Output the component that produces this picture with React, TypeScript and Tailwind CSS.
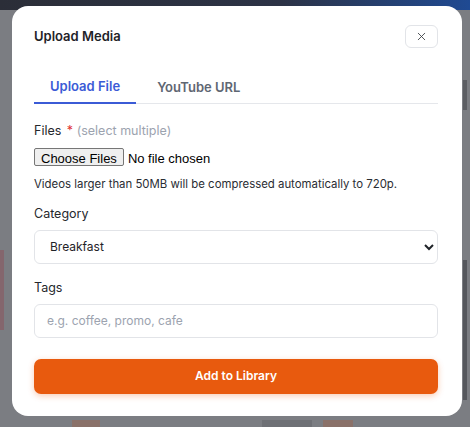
import { X } from "lucide-react";

const App = () => {
  return (
    // dimmed page behind the dialog
    <div className="w-[470px] h-[427px] overflow-hidden pt-[6px] pl-[12px] font-['Inter',sans-serif] [background:linear-gradient(90deg,#2b2e38,#2c3346_60%,#1f4a93)_0_0/100%_10px_no-repeat,linear-gradient(#84666d,#84666d)_0_250px/4px_80px_no-repeat,linear-gradient(#55575c,#55575c)_463px_260px/4px_140px_no-repeat,linear-gradient(#5c5e63,#5c5e63)_463px_80px/4px_30px_no-repeat,linear-gradient(#8a7169,#8a7169)_72px_420px/28px_7px_no-repeat,linear-gradient(#8a7169,#8a7169)_323px_420px/30px_7px_no-repeat,linear-gradient(#6e7075,#6e7075)_262px_420px/50px_7px_no-repeat,#7b7d82]">
      <div className="w-[450px] h-[410px] bg-white rounded-[16px] pl-[22px] pr-[24px] pt-[19px]">
        {/* header */}
        <div className="flex items-center justify-between">
          <h2 className="text-[13px] font-semibold text-[#1f2328]">Upload Media</h2>
          <button className="w-[33px] h-[23px] flex items-center justify-center rounded-[6px] border border-[#e2e4e8] text-[#3a3d42]">
            <X className="w-[13px] h-[13px]" strokeWidth={1.6} />
          </button>
        </div>

        {/* tabs */}
        <div className="mt-[16px] flex gap-[5px] border-b border-[#e5e7eb]">
          <button className="px-4 pt-[14px] pb-[8px] text-[13px] leading-[16px] font-semibold text-[#3b5bd6] border-b-2 border-[#3b5bd6] -mb-px">
            Upload File
          </button>
          <button className="px-4 pt-[14px] pb-[8px] text-[13px] leading-[16px] font-semibold text-[#5f6773]">
            YouTube URL
          </button>
        </div>

        {/* files */}
        <div className="mt-[19px]">
          <label className="block text-[12.5px] text-[#25282d] leading-[16px]">
            Files <span className="text-[#e03131] ml-[2px]">*</span>{" "}
            <span className="text-[#9ca3af]">(select multiple)</span>
          </label>
          <input
            type="file"
            multiple
            className="mt-[9px] block text-[13px] text-black font-['Liberation_Sans',Arial,sans-serif] file:mr-[4px] file:h-[18px] file:px-[6px] file:border file:border-[#767676] file:rounded-[2px] file:bg-[#efefef] file:text-black"
          />
          <p className="mt-[7px] text-[11.4px] leading-[16px] text-[#2a2d33]">
            Videos larger than 50MB will be compressed automatically to 720p.
          </p>
        </div>

        {/* category */}
        <div className="mt-[14px]">
          <label className="block text-[12.5px] text-[#25282d] leading-[16px]">Category</label>
          <select className="mt-[8px] w-full h-[34px] pl-[11px] pr-2 rounded-[6px] border border-[#e2e4e8] bg-white text-[12px] text-[#1f2328]">
            <option>Breakfast</option>
            <option>Lunch</option>
            <option>Dinner</option>
          </select>
        </div>

        {/* tags */}
        <div className="mt-[16px]">
          <label className="block text-[12.5px] text-[#25282d] leading-[16px]">Tags</label>
          <input
            type="text"
            placeholder="e.g. coffee, promo, cafe"
            className="mt-[8px] w-full h-[34px] px-[12px] rounded-[6px] border border-[#e2e4e8] text-[12px] text-[#1f2328] placeholder:text-[#9ca3af] outline-none"
          />
        </div>

        <button className="mt-[21px] w-full h-[35px] rounded-[7px] bg-[#e85a0e] text-white text-[12px] font-semibold shadow-[0_2px_6px_rgba(234,88,12,0.3)]">
          Add to Library
        </button>
      </div>
    </div>
  );
};

export default App;
